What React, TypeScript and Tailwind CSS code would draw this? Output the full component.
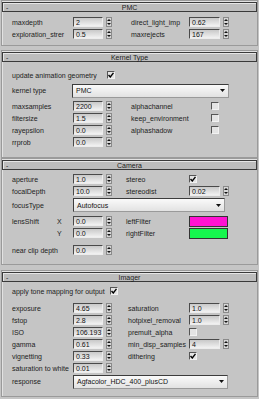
import React from "react";

const Label = ({ w, children, className = "" }: { w: number; children?: React.ReactNode; className?: string }) => (
  <div style={{ width: w }} className={`shrink-0 whitespace-nowrap overflow-visible leading-none text-[#222] ${className}`}>
    {children}
  </div>
);

const Spinner = () => (
  <div className="ml-[3px] w-[6px] h-[10px] shrink-0 flex flex-col items-center justify-center gap-[2px] bg-[#d6d6d6] border border-[#8a8a8a]">
    <svg width="4" height="2" viewBox="0 0 4 2"><path d="M0 2 L2 0 L4 2 Z" fill="#111" /></svg>
    <svg width="4" height="2" viewBox="0 0 4 2"><path d="M0 0 L2 2 L4 0 Z" fill="#111" /></svg>
  </div>
);

const Num = ({ w = 30, value }: { w?: number; value: string }) => (
  <div className="flex items-center shrink-0">
    <div
      style={{ width: w }}
      className="h-[10px] flex items-center pl-[2px] leading-none text-[#111] bg-gradient-to-b from-[#c9c9c9] to-[#f2f2f2] border-t border-l border-[#4a4a4a] border-r border-b border-r-[#ececec] border-b-[#ececec] overflow-hidden whitespace-nowrap"
    >
      {value}
    </div>
    <Spinner />
  </div>
);

const Check = ({ on }: { on?: boolean }) => (
  <div className="w-[8px] h-[8px] shrink-0 bg-[#e4e4e4] border-t border-l border-[#555] border-r border-b border-r-[#f2f2f2] border-b-[#f2f2f2] flex items-center justify-center">
    {on && (
      <svg width="6" height="6" viewBox="0 0 6 6">
        <path d="M0.5 3 L2.3 5 L5.5 0.8" stroke="#000" strokeWidth="1.4" fill="none" />
      </svg>
    )}
  </div>
);

const Select = ({ w, value }: { w: number; value: string }) => (
  <div
    style={{ width: w }}
    className="h-[14px] shrink-0 flex items-center justify-between pl-[3px] pr-[3px] bg-gradient-to-b from-[#fafafa] to-[#e2e2e2] border-t border-l border-[#3c3c3c] border-r border-b border-r-[#9a9a9a] border-b-[#9a9a9a] leading-none text-[#111] whitespace-nowrap overflow-hidden"
  >
    <span>{value}</span>
    <svg width="5" height="3" viewBox="0 0 5 3" className="shrink-0"><path d="M0 0 L5 0 L2.5 3 Z" fill="#111" /></svg>
  </div>
);

const Header = ({ title }: { title: string }) => (
  <div className="mt-[1px] h-[10px] flex items-center border border-[#3a3a3a] bg-[#bdbdbd] shadow-[inset_1px_1px_0_#e6e6e6] leading-none text-[#222]">
    <span className="w-[12px] pl-[3px] shrink-0">-</span>
    <span className="flex-1 text-center">{title}</span>
    <span className="w-[12px] shrink-0" />
  </div>
);

const Frame = ({ h, mt, children }: { h: number; mt: number; children: React.ReactNode }) => (
  <div
    style={{ height: h, marginTop: mt }}
    className="mx-[1px] border border-[#9a9a9a] shadow-[inset_1px_1px_0_#e2e2e2] flex flex-col"
  >
    {children}
  </div>
);

const Row = ({ h = 12, mt = 0, children }: { h?: number; mt?: number; children: React.ReactNode }) => (
  <div style={{ height: h, marginTop: mt }} className="pl-[10px] flex items-center shrink-0">
    {children}
  </div>
);

export default function App() {
  return (
    <div className="w-[259px] h-[399px] bg-[#c5c5c5] overflow-hidden text-[7px] font-['Liberation_Sans',Arial,sans-serif]">
      {/* PMC */}
      <Frame h={46} mt={0}>
        <Header title="PMC" />
        <Row mt={4}>
          <Label w={61}>maxdepth</Label>
          <Num value="2" />
          <div className="w-[19px]" />
          <Label w={58}>direct_light_imp</Label>
          <Num w={31} value="0.62" />
        </Row>
        <Row>
          <Label w={61}>exploration_strer</Label>
          <Num value="0.5" />
          <div className="w-[19px]" />
          <Label w={58}>maxrejects</Label>
          <Num w={31} value="167" />
        </Row>
      </Frame>

      {/* Kernel Type */}
      <Frame h={108} mt={4}>
        <Header title="Kernel Type" />
        <Row mt={7}>
          <Label w={95}>update animation geometry</Label>
          <Check on />
        </Row>
        <Row h={15} mt={2}>
          <Label w={60}>kernel type</Label>
          <Select w={157} value="PMC" />
        </Row>
        <Row mt={2}>
          <Label w={61}>maxsamples</Label>
          <Num value="2200" />
          <div className="w-[19px]" />
          <Label w={80}>alphachannel</Label>
          <Check />
        </Row>
        <Row>
          <Label w={61}>filtersize</Label>
          <Num value="1.5" />
          <div className="w-[19px]" />
          <Label w={80}>keep_environment</Label>
          <Check />
        </Row>
        <Row>
          <Label w={61}>rayepsilon</Label>
          <Num value="0.0" />
          <div className="w-[19px]" />
          <Label w={80}>alphashadow</Label>
          <Check />
        </Row>
        <Row>
          <Label w={61}>rrprob</Label>
          <Num value="0.0" />
        </Row>
      </Frame>

      {/* Camera */}
      <Frame h={107} mt={0}>
        <Header title="Camera" />
        <Row mt={3}>
          <Label w={61}>aperture</Label>
          <Num value="1.0" />
          <div className="w-[14px]" />
          <Label w={63}>stereo</Label>
          <Check on />
        </Row>
        <Row>
          <Label w={61}>focalDepth</Label>
          <Num value="10.0" />
          <div className="w-[14px]" />
          <Label w={63}>stereodist</Label>
          <Num w={31} value="0.02" />
        </Row>
        <Row h={14} mt={1}>
          <Label w={61}>focusType</Label>
          <Select w={152} value="Autofocus" />
        </Row>
        <Row mt={3}>
          <Label w={45}>lensShift</Label>
          <Label w={16}>X</Label>
          <Num value="0.0" />
          <div className="w-[14px]" />
          <Label w={63}>leftFilter</Label>
          <div className="w-[39px] h-[11px] bg-[#ff12d2] border border-[#333]" />
        </Row>
        <Row>
          <Label w={45}></Label>
          <Label w={16}>Y</Label>
          <Num value="0.0" />
          <div className="w-[14px]" />
          <Label w={63}>rightFilter</Label>
          <div className="w-[39px] h-[11px] bg-[#16f74e] border border-[#333]" />
        </Row>
        <Row mt={5}>
          <Label w={61}>near clip depth</Label>
          <Num value="0.0" />
        </Row>
      </Frame>

      {/* Imager */}
      <Frame h={127} mt={5}>
        <Header title="Imager" />
        <Row mt={3}>
          <Label w={98}>apply tone mapping for output</Label>
          <Check on />
        </Row>
        <Row mt={5}>
          <Label w={61}>exposure</Label>
          <Num value="4.65" />
          <div className="w-[16px]" />
          <Label w={61}>saturation</Label>
          <Num w={31} value="1.0" />
        </Row>
        <Row>
          <Label w={61}>fstop</Label>
          <Num value="2.8" />
          <div className="w-[16px]" />
          <Label w={61}>hotpixel_removal</Label>
          <Num w={31} value="1.0" />
        </Row>
        <Row>
          <Label w={61}>ISO</Label>
          <Num value="106.193" />
          <div className="w-[16px]" />
          <Label w={61}>premult_alpha</Label>
          <Check />
        </Row>
        <Row>
          <Label w={61}>gamma</Label>
          <Num value="0.61" />
          <div className="w-[16px]" />
          <Label w={61}>min_disp_samples</Label>
          <Num w={31} value="4" />
        </Row>
        <Row>
          <Label w={61}>vignetting</Label>
          <Num value="0.33" />
          <div className="w-[16px]" />
          <Label w={61}>dithering</Label>
          <Check on />
        </Row>
        <Row>
          <Label w={61}>saturation to white</Label>
          <Num value="0.01" />
        </Row>
        <Row h={15}>
          <Label w={61}>response</Label>
          <Select w={155} value="Agfacolor_HDC_400_plusCD" />
        </Row>
      </Frame>
    </div>
  );
}
